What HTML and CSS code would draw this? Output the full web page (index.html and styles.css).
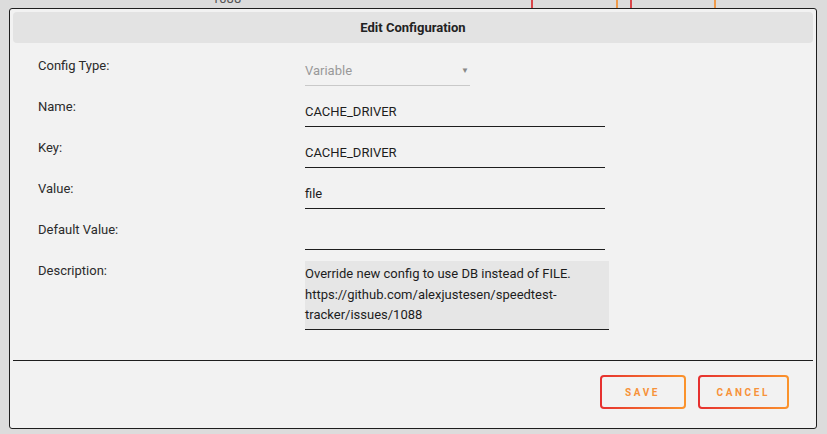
FILE: index.html
```html
<!DOCTYPE html>
<html lang="en">
<head>
<meta charset="utf-8">
<title>Edit Configuration</title>
<link rel="stylesheet" href="styles.css">
</head>
<body>
  <div class="page-strip">
    <span class="page-num">1088</span>
    <span class="mark red m1"></span>
    <span class="mark orange m2"></span>
    <span class="mark red m3"></span>
    <span class="mark orange m4"></span>
  </div>

  <div class="modal">
    <div class="modal-header">Edit Configuration</div>
    <form class="modal-body">
      <div class="row">
        <label class="label">Config Type:</label>
        <div class="select">
          <span>Variable</span>
          <span class="arrow">&#9660;</span>
        </div>
      </div>
      <div class="row">
        <label class="label">Name:</label>
        <div class="input">CACHE_DRIVER</div>
      </div>
      <div class="row">
        <label class="label">Key:</label>
        <div class="input">CACHE_DRIVER</div>
      </div>
      <div class="row">
        <label class="label">Value:</label>
        <div class="input">file</div>
      </div>
      <div class="row">
        <label class="label">Default Value:</label>
        <div class="input"></div>
      </div>
      <div class="row">
        <label class="label">Description:</label>
        <div class="textarea">Override new config to use DB instead of FILE.<br>https://github.com/alexjustesen/speedtest-<br>tracker/issues/1088</div>
      </div>
    </form>
    <div class="modal-footer">
      <button class="btn" type="button">Save</button>
      <button class="btn" type="button">Cancel</button>
    </div>
  </div>
</body>
</html>
```
FILE: styles.css
```css
html, body {
  margin: 0;
  padding: 0;
}
body {
  background: #dcdcdc;
  font-family: Roboto, "Noto Sans", sans-serif;
  width: 827px;
  height: 434px;
  overflow: hidden;
}

.page-strip {
  display: flex;
  align-items: flex-start;
  height: 8px;
}
.page-num {
  margin-left: 212px;
  margin-top: -9px;
  font-size: 13px;
  line-height: 15px;
  color: #555;
}
.mark {
  width: 2px;
  height: 8px;
}
.red { background: #d9464a; }
.orange { background: #ef9a4a; }
.m1 { margin-left: 290px; }
.m2 { margin-left: 83px; }
.m3 { margin-left: 12px; }
.m4 { margin-left: 82px; }

.modal {
  position: absolute;
  top: 8px;
  left: 9px;
  width: 808px;
  height: 421px;
  box-sizing: border-box;
  border: 1px solid #1e1e1e;
  border-radius: 3px;
  background: #f2f2f2;
  padding: 3px;
  display: flex;
  flex-direction: column;
}

.modal-header {
  height: 31px;
  flex: none;
  background: #e3e3e3;
  border-radius: 4px;
  display: flex;
  align-items: center;
  justify-content: center;
  font-weight: 700;
  font-size: 13px;
  color: #222;
}

.modal-body {
  margin: 0;
  padding: 13px 0 30px 25px;
  display: flex;
  flex-direction: column;
  gap: 11px;
}

.row {
  display: grid;
  grid-template-columns: 267px 1fr;
  align-items: start;
}

.label {
  font-size: 13px;
  line-height: 16px;
  padding-top: 2px;
  color: #2b2b2b;
}

.input {
  width: 300px;
  height: 30px;
  box-sizing: border-box;
  border-bottom: 1px solid #1e1e1e;
  font-size: 13px;
  line-height: 29px;
  color: #1d1d1d;
}

.select {
  width: 165px;
  height: 30px;
  box-sizing: border-box;
  border-bottom: 1px solid #c9c9c9;
  display: flex;
  justify-content: space-between;
  align-items: center;
  font-size: 13px;
  color: #999;
}
.arrow {
  font-size: 8px;
  color: #888;
  padding-right: 1px;
}

.textarea {
  width: 304px;
  height: 69px;
  box-sizing: border-box;
  background: #e6e6e6;
  border-bottom: 1px solid #1e1e1e;
  padding-top: 3px;
  font-size: 13px;
  line-height: 20.5px;
  color: #1d1d1d;
}

.modal-footer {
  border-top: 1px solid #1e1e1e;
  padding: 14px 24px 16px 0;
  display: flex;
  justify-content: flex-end;
  gap: 12px;
}

.btn {
  min-width: 86px;
  height: 34px;
  padding: 0 17px;
  border: 2px solid transparent;
  border-radius: 4px;
  background:
    linear-gradient(#f2f2f2, #f2f2f2) padding-box,
    linear-gradient(90deg, #e62f2f, #fb942c) border-box;
  font-family: Roboto, "Noto Sans", sans-serif;
  font-weight: 700;
  font-size: 10px;
  letter-spacing: 2.6px;
  text-transform: uppercase;
  color: #f7923a;
  cursor: pointer;
}
```
